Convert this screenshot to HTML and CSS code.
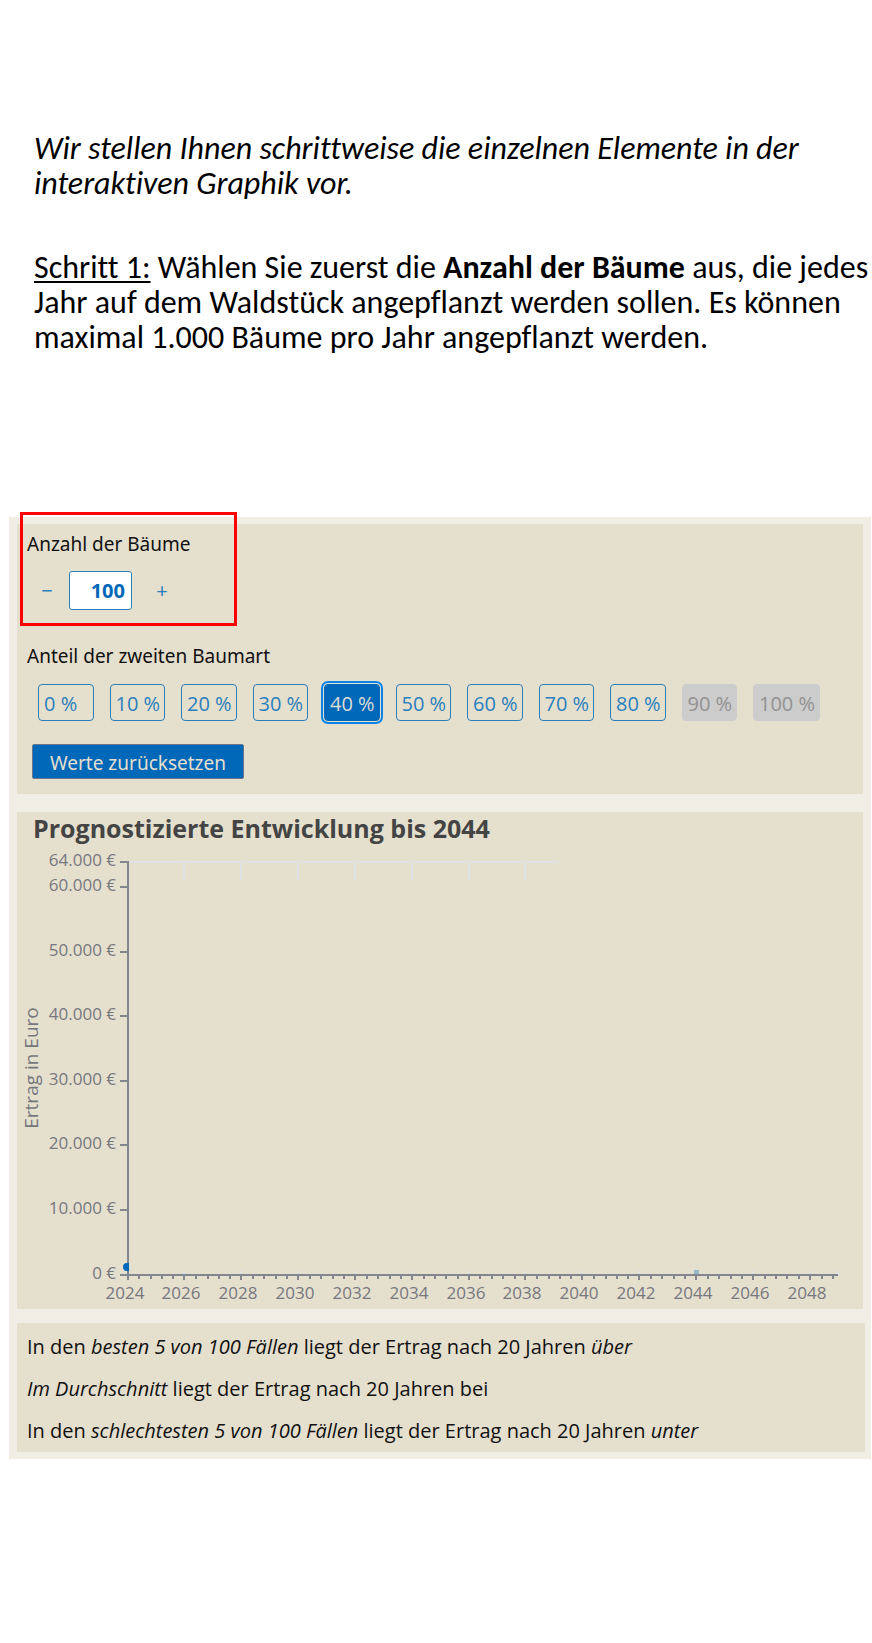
FILE: index.html
```
<!DOCTYPE html>
<html lang="de">
<head>
<meta charset="utf-8">
<meta name="viewport" content="width=device-width, initial-scale=1">
<title>Interaktive Graphik – Schritt 1</title>
<link rel="stylesheet" href="styles.css">
</head>
<body>
<header class="intro">
  <p class="lead"><em>Wir stellen Ihnen schrittweise die einzelnen Elemente in der interaktiven Graphik vor.</em></p>
  <p class="step"><u>Schritt 1:</u> Wählen Sie zuerst die <strong>Anzahl der Bäume</strong> aus, die jedes Jahr auf dem Waldstück angepflanzt werden sollen. Es können maximal 1.000 Bäume pro Jahr angepflanzt werden.</p>
</header>
<main class="board">
  <form class="panel controls">
    <div class="highlight"></div>
    <label class="label" for="trees">Anzahl der Bäume</label>
    <div class="stepper">
      <button type="button" class="sign" aria-label="Weniger Bäume">−</button>
      <input class="count" id="trees" type="text" inputmode="numeric" value="100">
      <button type="button" class="sign" aria-label="Mehr Bäume">+</button>
    </div>
    <div class="label share-label" id="share">Anteil der zweiten Baumart</div>
    <div class="shares" role="group" aria-labelledby="share">
      <button type="button" class="share">0 %</button>
      <button type="button" class="share">10 %</button>
      <button type="button" class="share">20 %</button>
      <button type="button" class="share">30 %</button>
      <button type="button" class="share selected" aria-pressed="true">40 %</button>
      <button type="button" class="share">50 %</button>
      <button type="button" class="share">60 %</button>
      <button type="button" class="share">70 %</button>
      <button type="button" class="share">80 %</button>
      <button type="button" class="share" disabled>90 %</button>
      <button type="button" class="share" disabled>100 %</button>
    </div>
    <button type="button" class="reset">Werte zurücksetzen</button>
  </form>
  <section class="panel forecast">
    <h2 class="title">Prognostizierte Entwicklung bis 2044</h2>
    <svg class="chart" id="chart" viewBox="0 32 846 465" role="img" aria-label="Ertrag in Euro, 2024 bis 2048"></svg>
  </section>
  <section class="panel results">
    <p>In den <em>besten 5 von 100 Fällen</em> liegt der Ertrag nach 20 Jahren <em>über</em></p>
    <p><em>Im Durchschnitt</em> liegt der Ertrag nach 20 Jahren bei</p>
    <p>In den <em>schlechtesten 5 von 100 Fällen</em> liegt der Ertrag nach 20 Jahren <em>unter</em></p>
  </section>
</main>
<script src="chart.js"></script>
</body>
</html>
```
FILE: styles.css
```
* {
  box-sizing: border-box;
}

body {
  margin: 0;
  background: #fff;
  color: #111;
  font-family: "Open Sans", "Noto Sans", sans-serif;
}

p,
h2 {
  margin: 0;
}

.intro {
  display: grid;
  gap: 49px;
  padding: 131px 0 0 34px;
  color: #000;
  font: 32px/35px Carlito, Lato, sans-serif;
  font-variant-ligatures: none;
}

.step u {
  text-decoration-thickness: 2px;
  text-underline-offset: 3px;
}

.board {
  margin: 162px 1px 185px 9px;
  padding: 7px 6px 7px 8px;
  background: #f1eee6;
}

.panel {
  background: #e5dfce;
}

.controls {
  position: relative;
  display: flex;
  flex-direction: column;
  align-items: flex-start;
  margin-right: 2px;
  padding: 6px 10px 15px;
  font-family: "Noto Sans", sans-serif;
}

.highlight {
  position: absolute;
  top: -12px;
  left: 3px;
  width: 217px;
  height: 114px;
  border: 3px solid #f00;
  pointer-events: none;
}

.label {
  font-size: 19px;
  line-height: 28px;
}

.stepper {
  display: flex;
  gap: 12px;
  margin: 13px 0 32px 10px;
}

.sign {
  width: 20px;
  padding: 0;
  border: 0;
  background: none;
  color: #2a80bd;
  font: 20px "Noto Sans", sans-serif;
}

.stepper .sign:last-child {
  margin-left: 8px;
}

.count {
  width: 63px;
  height: 39px;
  padding: 0 6px;
  border: 1px solid #2a80bd;
  border-radius: 3px;
  background: #fff;
  color: #0068b8;
  font: bold 20px "Open Sans", sans-serif;
  text-align: right;
}

.shares {
  display: grid;
  grid-template-columns: repeat(10, minmax(0, 1fr)) 67px;
  gap: 16px;
  align-self: stretch;
  margin: 14px 33px 23px 11px;
}

.share {
  height: 37px;
  padding: 1px 5px 0;
  border: 1px solid #2a80bd;
  border-radius: 4px;
  background: none;
  color: #2a80bd;
  font: 20px "Open Sans", sans-serif;
  text-align: left;
  white-space: nowrap;
}

.selected {
  background: #0068b8;
  border-color: #0068b8;
  color: #dcdcd6;
  outline: 2px solid #0a84e8;
  outline-offset: 1px;
}

.share:disabled {
  background: #ccc;
  border-color: #ccc;
  color: #929292;
}

.reset {
  height: 35px;
  margin-left: 5px;
  padding: 2px 17px 0;
  border: 1px solid #66788a;
  border-radius: 2px;
  background: #0068b8;
  color: #e5dfce;
  font: 19px "Noto Sans", sans-serif;
}

.forecast {
  margin: 18px 2px 14px 0;
}

.title {
  height: 32px;
  padding-left: 16px;
  color: #444;
  font-size: 25px;
  line-height: 33px;
}

.chart {
  display: block;
  width: 100%;
  font-size: 17px;
}

.tick-text {
  fill: #77787e;
}

.axis {
  stroke: #83868c;
  stroke-width: 2;
}

.guide {
  stroke: #dfe1e4;
  stroke-width: 2;
  shape-rendering: crispEdges;
}

.axis-title {
  fill: #77787e;
  font-size: 19px;
}

.point {
  fill: #0068b8;
}

.point-end {
  fill: #8fb9cf;
}

.results {
  padding: 3px 10px 0;
  font-size: 20px;
  line-height: 42px;
}
```
FILE: chart.js
```
const svg = document.getElementById('chart');
const LEFT = 111, RIGHT = 821, TOP = 50, BASE = 463;
const STEP = 56.85; // distance between two labelled years
const xOf = i => Math.floor(LEFT + i * STEP);

function add(name, attrs, text) {
  const el = document.createElementNS('http://www.w3.org/2000/svg', name);
  for (const key in attrs) el.setAttribute(key, attrs[key]);
  if (text) el.textContent = text;
  svg.appendChild(el);
}
function line(cls, x1, y1, x2, y2) {
  add('line', { class: cls, x1, y1, x2, y2 });
}

// light guides along the top edge and above the year axis
line('guide', LEFT, TOP, 542, TOP);
for (let i = 1; i <= 12; i++) {
  if (i <= 7) line('guide', xOf(i), TOP, xOf(i), 68);
  line('guide', xOf(i), 459, xOf(i), BASE);
}
line('guide', RIGHT, 459, RIGHT, BASE);

// value axis
line('axis', LEFT, TOP - 1, LEFT, BASE + 5);
[['64.000 €', 50], ['60.000 €', 75], ['50.000 €', 140], ['40.000 €', 204],
 ['30.000 €', 269], ['20.000 €', 333], ['10.000 €', 398], ['0 €', BASE]].forEach(([label, y]) => {
  line('axis', 103, y, LEFT, y);
  add('text', { class: 'tick-text', x: 99, y: y + 4, 'text-anchor': 'end' }, label);
});

// year axis with four short ticks between labels
line('axis', 103, BASE, RIGHT, BASE);
for (let i = 0; i <= 12; i++) {
  const x = xOf(i);
  line('axis', x, BASE, x, BASE + 5);
  for (let k = 1; k < 5; k++) {
    const m = Math.round(LEFT + (i + k / 5) * STEP);
    if (m < RIGHT) line('axis', m, BASE, m, BASE + 4);
  }
  add('text', { class: 'tick-text', x: x - 3, y: BASE + 24, 'text-anchor': 'middle' }, String(2024 + i * 2));
}

// start and end value
add('path', { class: 'point', d: 'M112 451v8a4 4 0 0 1 -2 0a4 4 0 0 1 0 -8Z' });
add('rect', { class: 'point-end', x: 677, y: 458, width: 5, height: 4 });

add('text', { class: 'axis-title', transform: 'translate(21 256) rotate(-90)', 'text-anchor': 'middle' }, 'Ertrag in Euro');
```
